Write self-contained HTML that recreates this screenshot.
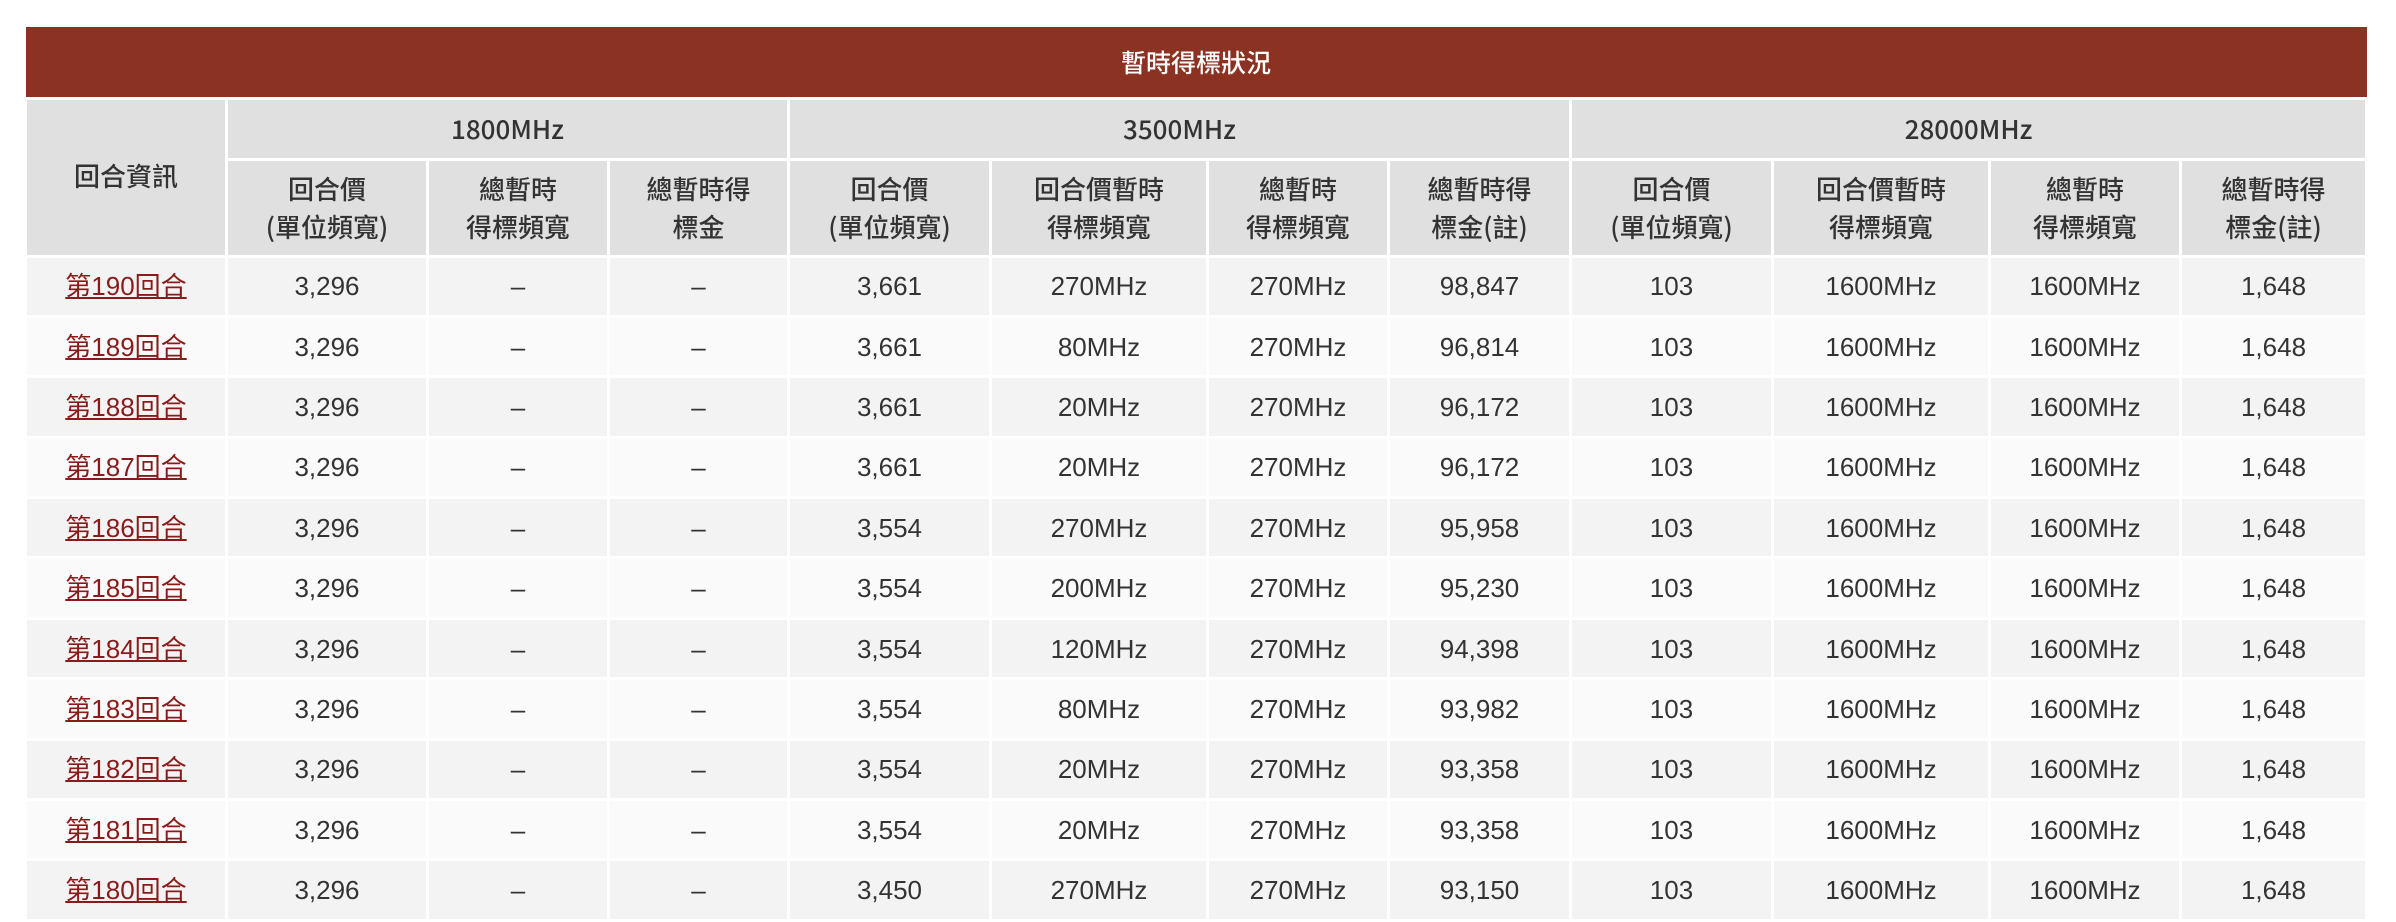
<!DOCTYPE html>
<html><head><meta charset="utf-8"><style>
html,body{margin:0;padding:0;background:#fff;width:2396px;height:884px;overflow:hidden}
table{position:absolute;left:24px;top:27px;width:2341px;table-layout:fixed;border-collapse:collapse;font-family:"Liberation Sans","Noto Sans CJK TC",sans-serif;color:#333;font-size:26px}
td,th{border:3px solid #fff;text-align:center;padding:0;line-height:36px;box-sizing:border-box}
th{background:#e0e0e0;font-weight:500;color:#333;font-family:"Noto Sans CJK TC",sans-serif;font-size:26px;line-height:38px}
th.title{background:#8b3222;color:#fff;height:71px;border-top:0;border-left:0;border-right:0;font-size:25px}
tr.h1 th{height:61px}
tr.h2 th{height:97px}
td{height:60.4px}
tbody tr:nth-child(odd) td{background:#f3f3f3}
tbody tr:nth-child(even) td{background:#fafafa}
a{color:#8b1a1a;text-decoration:underline}
</style></head><body>
<table>
<colgroup><col style="width:201px"><col style="width:201px"><col style="width:181px"><col style="width:180px"><col style="width:202px"><col style="width:217px"><col style="width:181px"><col style="width:182px"><col style="width:202px"><col style="width:217px"><col style="width:191px"><col style="width:186px"></colgroup>
<thead>
<tr><th class="title" colspan="12">暫時得標狀況</th></tr>
<tr class="h1"><th rowspan="2" style="vertical-align:middle;padding-bottom:2px">回合資訊</th><th colspan="3">1800MHz</th><th colspan="4">3500MHz</th><th colspan="4">28000MHz</th></tr>
<tr class="h2"><th>回合價<br>(單位頻寬)</th><th>總暫時<br>得標頻寬</th><th>總暫時得<br>標金</th><th>回合價<br>(單位頻寬)</th><th>回合價暫時<br>得標頻寬</th><th>總暫時<br>得標頻寬</th><th>總暫時得<br>標金(註)</th><th>回合價<br>(單位頻寬)</th><th>回合價暫時<br>得標頻寬</th><th>總暫時<br>得標頻寬</th><th>總暫時得<br>標金(註)</th></tr>
</thead>
<tbody>
<tr><td><a>第190回合</a></td><td>3,296</td><td>–</td><td>–</td><td>3,661</td><td>270MHz</td><td>270MHz</td><td>98,847</td><td>103</td><td>1600MHz</td><td>1600MHz</td><td>1,648</td></tr>
<tr><td><a>第189回合</a></td><td>3,296</td><td>–</td><td>–</td><td>3,661</td><td>80MHz</td><td>270MHz</td><td>96,814</td><td>103</td><td>1600MHz</td><td>1600MHz</td><td>1,648</td></tr>
<tr><td><a>第188回合</a></td><td>3,296</td><td>–</td><td>–</td><td>3,661</td><td>20MHz</td><td>270MHz</td><td>96,172</td><td>103</td><td>1600MHz</td><td>1600MHz</td><td>1,648</td></tr>
<tr><td><a>第187回合</a></td><td>3,296</td><td>–</td><td>–</td><td>3,661</td><td>20MHz</td><td>270MHz</td><td>96,172</td><td>103</td><td>1600MHz</td><td>1600MHz</td><td>1,648</td></tr>
<tr><td><a>第186回合</a></td><td>3,296</td><td>–</td><td>–</td><td>3,554</td><td>270MHz</td><td>270MHz</td><td>95,958</td><td>103</td><td>1600MHz</td><td>1600MHz</td><td>1,648</td></tr>
<tr><td><a>第185回合</a></td><td>3,296</td><td>–</td><td>–</td><td>3,554</td><td>200MHz</td><td>270MHz</td><td>95,230</td><td>103</td><td>1600MHz</td><td>1600MHz</td><td>1,648</td></tr>
<tr><td><a>第184回合</a></td><td>3,296</td><td>–</td><td>–</td><td>3,554</td><td>120MHz</td><td>270MHz</td><td>94,398</td><td>103</td><td>1600MHz</td><td>1600MHz</td><td>1,648</td></tr>
<tr><td><a>第183回合</a></td><td>3,296</td><td>–</td><td>–</td><td>3,554</td><td>80MHz</td><td>270MHz</td><td>93,982</td><td>103</td><td>1600MHz</td><td>1600MHz</td><td>1,648</td></tr>
<tr><td><a>第182回合</a></td><td>3,296</td><td>–</td><td>–</td><td>3,554</td><td>20MHz</td><td>270MHz</td><td>93,358</td><td>103</td><td>1600MHz</td><td>1600MHz</td><td>1,648</td></tr>
<tr><td><a>第181回合</a></td><td>3,296</td><td>–</td><td>–</td><td>3,554</td><td>20MHz</td><td>270MHz</td><td>93,358</td><td>103</td><td>1600MHz</td><td>1600MHz</td><td>1,648</td></tr>
<tr><td><a>第180回合</a></td><td>3,296</td><td>–</td><td>–</td><td>3,450</td><td>270MHz</td><td>270MHz</td><td>93,150</td><td>103</td><td>1600MHz</td><td>1600MHz</td><td>1,648</td></tr>
</tbody></table>
</body></html>
